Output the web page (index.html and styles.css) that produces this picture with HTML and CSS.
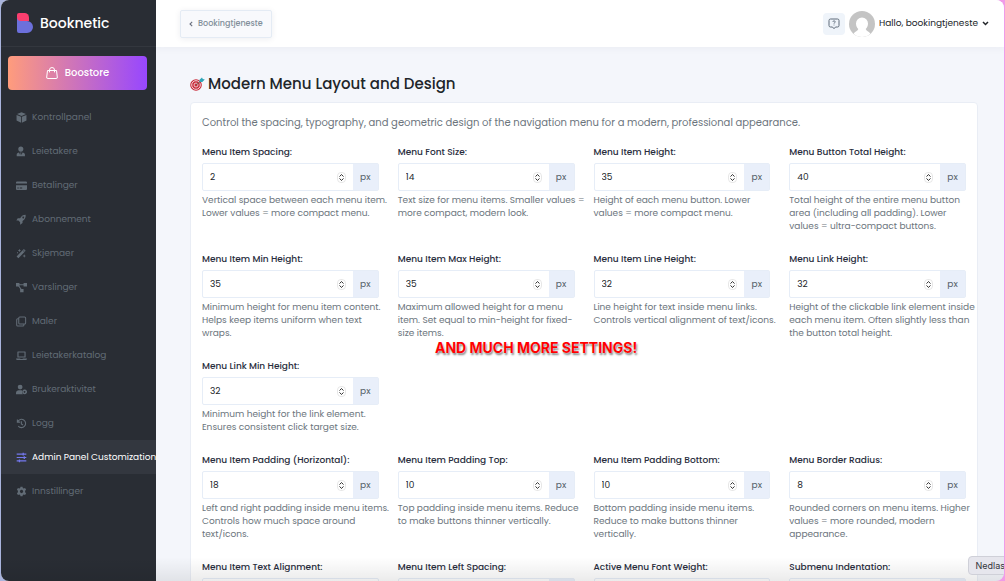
FILE: index.html
```html
<!DOCTYPE html>
<html lang="no">
<head>
  <meta charset="UTF-8" />
  <meta name="viewport" content="width=device-width, initial-scale=1.0" />
  <title>Booknetic</title>
  <link rel="stylesheet" href="styles.css">
</head>
<body>
  <svg class="sprite" aria-hidden="true">
    <symbol id="stepper" viewBox="0 0 9 11">
      <rect x="0.5" y="0.5" width="8" height="10" rx="3.5" fill="#fff" stroke="#dcdcdc" stroke-width="0.7" />
      <path d="M2.8 4.3 4.5 2.5 6.2 4.3M2.8 6.7 4.5 8.5 6.2 6.7" fill="none" stroke="#333" stroke-width="1" stroke-linecap="round" stroke-linejoin="round" />
    </symbol>
  </svg>

  <div class="window">
    <aside class="sidebar">
      <a class="brand" href="#">
        <svg width="16" height="20" viewBox="0 0 16 20">
          <path d="M0 2a2 2 0 0 1 2-2h5.500A4.500 4.500 0 0 1 12 4.500V8H0z" fill="#fb3e6e" />
          <path d="M0 4c0 2.500 1.500 4 4 4h6a6 6 0 0 1 0 12H2a2 2 0 0 1-2-2z" fill="#6c70dc" />
        </svg>
        <span>Booknetic</span>
      </a>
      <a class="boostore" href="#">
        <svg width="12" height="12" viewBox="0 0 12 12" fill="none" stroke="#fff" stroke-width="1">
          <path d="M1.500 3.500h9l.8 6.500a1.200 1.200 0 0 1-1.200 1.500H1.900A1.200 1.200 0 0 1 .7 10z" stroke-linejoin="round" />
          <path d="M3.500 5V3a2.500 2.500 0 0 1 5 0v2" stroke-linecap="round" />
        </svg>
        <span>Boostore</span>
      </a>
      <nav class="menu">
        <a href="#">
          <svg viewBox="0 0 16 16"><path d="M8 .5l6.500 2.500L8 5.800 1.500 3zM.8 4.200L7.400 7v8.500L.8 12.500zM15.200 4.200L8.600 7v8.500l6.600-3z" /></svg>
          <span>Kontrollpanel</span>
        </a>
        <a href="#">
          <svg viewBox="0 0 16 16"><circle cx="7" cy="4.500" r="3.700" /><path d="M1 15v-2.500C1 10.500 2.500 9.500 4.500 9.300L6 13l.6-2L6 9.500h2L7.400 11l.6 2 1.500-3.700c2 .2 3.500 1.200 3.500 3.200V15z" /></svg>
          <span>Leietakere</span>
        </a>
        <a href="#">
          <svg viewBox="0 0 16 16"><path d="M1.500 2h13q1.500 0 1.500 1.500V5H0V3.500Q0 2 1.500 2zM0 7.500h16V13q0 1.500-1.500 1.500h-13Q0 14.500 0 13zM2 11v1.200h2V11zm3.500 0v1.200H9V11z" fill-rule="evenodd" /></svg>
          <span>Betalinger</span>
        </a>
        <a href="#">
          <svg viewBox="0 0 16 16"><path d="M14 1c.4 4-1 7-4.500 9v3L6 15.500V12L3.500 9.500H.5L2.500 6H6C8 2.500 10.500 1 14 1zM10.500 3.700a1.300 1.300 0 1 0 .1 0z" fill-rule="evenodd" /></svg>
          <span>Abonnement</span>
        </a>
        <a href="#">
          <svg viewBox="0 0 16 16"><path d="M11.500 1.500l2.500 2.500L3.500 15 .8 12.300zM10.500 4.500l1 1 1-1.200-1-1z" fill-rule="evenodd" /><path d="M5 1l.7 1.800 1.800.7-1.800.7L5 6l-.7-1.800-1.800-.7 1.800-.7zM12 9l.7 1.800 1.800.7-1.800.7L12 14l-.7-1.800-1.800-.7 1.800-.7zM1.500 6h1.500v1.500H1.500z" /></svg>
          <span>Skjemaer</span>
        </a>
        <a href="#">
          <svg viewBox="0 0 16 16"><path d="M0 1.500h5v5H0zM11 1.500h5v5h-5zM6 10h5v5H6z" /><path d="M4 4h8M3.500 5l4.500 6.500" fill="none" stroke="currentColor" stroke-width="1.500" /></svg>
          <span>Varslinger</span>
        </a>
        <a href="#">
          <svg viewBox="0 0 16 16" fill="none" stroke="currentColor" stroke-width="1.500"><rect x="4" y="1.500" width="10" height="10" rx="1.500" /><path d="M4 4H2.500Q1 4 1 5.500V13q0 1.500 1.500 1.500H10q1.500 0 1.500-1.500v-1.500" /></svg>
          <span>Maler</span>
        </a>
        <a href="#">
          <svg viewBox="0 0 16 16"><path d="M2.800 2h10.400q.8 0 .8.800V11H2V2.800Q2 2 2.800 2zm.9 1.700v5.600h8.600V3.700zM0 12.200h6l.5.800h3l.5-.8h6q0 2.300-2 2.300H2q-2 0-2-2.300z" fill-rule="evenodd" /></svg>
          <span>Leietakerkatalog</span>
        </a>
        <a href="#">
          <svg viewBox="0 0 16 16"><circle cx="6" cy="4.500" r="3.500" /><path d="M0 15v-2c0-2.500 2-4 4-4h3.500q1 0 1.500.5-1 3 1 5.500z" /><path d="M12.500 8a3.500 3.500 0 1 0 .1 0zm0 2.300a1.200 1.200 0 1 1-.1 0z" fill-rule="evenodd" /></svg>
          <span>Brukeraktivitet</span>
        </a>
        <a href="#">
          <svg viewBox="0 0 16 16" fill="none" stroke="currentColor" stroke-width="1.600"><path d="M2 2v4h4M2.500 5.500a6 6 0 1 1 .8 6.200M7.800 4.800V8.500l2.400 1.600" /></svg>
          <span>Logg</span>
        </a>
        <a class="active" href="#">
          <svg viewBox="0 0 16 16" fill="none" stroke="currentColor" stroke-width="1.800"><path d="M1 3h14M1 8h14M1 13h14M10.500 1v4M12 6v4M5 11v4" /></svg>
          <span>Admin Panel Customization</span>
        </a>
        <a href="#">
          <svg viewBox="0 0 16 16"><path d="M6.500 1h3l.4 2 1.300.7 2-.7 1.500 2.600L13.200 7v2l1.500 1.400L13.200 13l-2-.7-1.300.7-.4 2h-3l-.4-2-1.300-.7-2 .7-1.500-2.600L2.800 9V7L1.300 5.600 2.800 3l2 .7L6.100 3zM8 5.600a2.400 2.400 0 1 0 .1 0z" fill-rule="evenodd" /></svg>
          <span>Innstillinger</span>
        </a>
      </nav>
    </aside>

    <div class="main">
      <header class="topbar">
        <button class="tenant" type="button">
          <svg width="4" height="6" viewBox="0 0 4 6"><path d="M3.200.8 1 3l2.200 2.200" fill="none" stroke="#6b7280" stroke-width="1.100" /></svg>
          Bookingtjeneste
        </button>
        <div class="account">
          <button class="help-btn" type="button" aria-label="Help">
            <svg width="12" height="12" viewBox="0 0 12 12" fill="none" stroke="#5f6b7a" stroke-width="1">
              <path d="M2.500 1h7q1.500 0 1.500 1.500v5Q11 9 9.500 9H7.500L6 10.700 4.500 9h-2Q1 9 1 7.500v-5Q1 1 2.500 1z" stroke-linejoin="round" />
              <path d="M4.900 3.900c0-1.500 2.300-1.500 2.300 0 0 .9-1.200.9-1.200 1.800M6 6.600v.8" stroke-width="0.900" />
            </svg>
          </button>
          <button class="user" type="button">
            <svg width="26" height="26" viewBox="0 0 26 26">
              <circle cx="13" cy="13" r="13" fill="#c4c4c4" />
              <path d="M13 6.500a6 6 0 0 1 6 6c0 2.600-1 4.300-2.300 5.500.4 2 3.300 2.500 4.800 4.800A13 13 0 0 1 13 26a13 13 0 0 1-8.500-3.200C6 20.500 8.900 20 9.300 18 8 16.800 7 15.100 7 12.500a6 6 0 0 1 6-6z" fill="#fff" />
            </svg>
            <span>Hallo, bookingtjeneste</span>
            <svg width="7" height="5" viewBox="0 0 7 5"><path d="M1 1l2.500 2.500L6 1" fill="none" stroke="#212529" stroke-width="1.500" /></svg>
          </button>
        </div>
      </header>

      <main class="content">
        <h1>
          <svg width="15" height="14" viewBox="0 0 15 14">
            <circle cx="6" cy="8" r="5.800" fill="#c92a38" />
            <circle cx="6" cy="8" r="4.300" fill="none" stroke="#f1d8dc" stroke-width="1" />
            <circle cx="6" cy="8" r="2" fill="none" stroke="#f1d8dc" stroke-width="0.900" />
            <path d="M6 8l5-4" stroke="#7c5148" stroke-width="1" />
            <path d="M9.500 5V2.700L12 .5l.8 1.500 2 .4-2.500 2.600z" fill="#2fa5b8" />
          </svg>
          Modern Menu Layout and Design
        </h1>
        <section class="card">
          <p class="intro">Control the spacing, typography, and geometric design of the navigation menu for a modern, professional appearance.</p>
          <div class="fields">
            <div class="field">
              <label for="item-spacing">Menu Item Spacing:</label>
              <div class="group"><input id="item-spacing" type="number" value="2"><svg class="stepper"><use href="#stepper" /></svg><span class="unit">px</span></div>
              <p>Vertical space between each menu item. Lower values = more compact menu.</p>
            </div>
            <div class="field">
              <label for="font-size">Menu Font Size:</label>
              <div class="group"><input id="font-size" type="number" value="14"><svg class="stepper"><use href="#stepper" /></svg><span class="unit">px</span></div>
              <p>Text size for menu items. Smaller values = more compact, modern look.</p>
            </div>
            <div class="field">
              <label for="item-height">Menu Item Height:</label>
              <div class="group"><input id="item-height" type="number" value="35"><svg class="stepper"><use href="#stepper" /></svg><span class="unit">px</span></div>
              <p>Height of each menu button. Lower values = more compact menu.</p>
            </div>
            <div class="field">
              <label for="total-height">Menu Button Total Height:</label>
              <div class="group"><input id="total-height" type="number" value="40"><svg class="stepper"><use href="#stepper" /></svg><span class="unit">px</span></div>
              <p>Total height of the entire menu button area (including all padding). Lower values = ultra-compact buttons.</p>
            </div>
            <div class="field">
              <label for="min-height">Menu Item Min Height:</label>
              <div class="group"><input id="min-height" type="number" value="35"><svg class="stepper"><use href="#stepper" /></svg><span class="unit">px</span></div>
              <p>Minimum height for menu item content. Helps keep items uniform when text wraps.</p>
            </div>
            <div class="field">
              <label for="max-height">Menu Item Max Height:</label>
              <div class="group"><input id="max-height" type="number" value="35"><svg class="stepper"><use href="#stepper" /></svg><span class="unit">px</span></div>
              <p>Maximum allowed height for a menu item. Set equal to min-height for fixed-size items.</p>
            </div>
            <div class="field">
              <label for="line-height">Menu Item Line Height:</label>
              <div class="group"><input id="line-height" type="number" value="32"><svg class="stepper"><use href="#stepper" /></svg><span class="unit">px</span></div>
              <p>Line height for text inside menu links. Controls vertical alignment of text/icons.</p>
            </div>
            <div class="field">
              <label for="link-height">Menu Link Height:</label>
              <div class="group"><input id="link-height" type="number" value="32"><svg class="stepper"><use href="#stepper" /></svg><span class="unit">px</span></div>
              <p>Height of the clickable link element inside each menu item. Often slightly less than the button total height.</p>
            </div>
            <div class="field">
              <label for="link-min-height">Menu Link Min Height:</label>
              <div class="group"><input id="link-min-height" type="number" value="32"><svg class="stepper"><use href="#stepper" /></svg><span class="unit">px</span></div>
              <p>Minimum height for the link element. Ensures consistent click target size.</p>
            </div>
          </div>
          <div class="fields">
            <div class="field">
              <label for="padding-x">Menu Item Padding (Horizontal):</label>
              <div class="group"><input id="padding-x" type="number" value="18"><svg class="stepper"><use href="#stepper" /></svg><span class="unit">px</span></div>
              <p>Left and right padding inside menu items. Controls how much space around text/icons.</p>
            </div>
            <div class="field">
              <label for="padding-top">Menu Item Padding Top:</label>
              <div class="group"><input id="padding-top" type="number" value="10"><svg class="stepper"><use href="#stepper" /></svg><span class="unit">px</span></div>
              <p>Top padding inside menu items. Reduce to make buttons thinner vertically.</p>
            </div>
            <div class="field">
              <label for="padding-bottom">Menu Item Padding Bottom:</label>
              <div class="group"><input id="padding-bottom" type="number" value="10"><svg class="stepper"><use href="#stepper" /></svg><span class="unit">px</span></div>
              <p>Bottom padding inside menu items. Reduce to make buttons thinner vertically.</p>
            </div>
            <div class="field">
              <label for="radius">Menu Border Radius:</label>
              <div class="group"><input id="radius" type="number" value="8"><svg class="stepper"><use href="#stepper" /></svg><span class="unit">px</span></div>
              <p>Rounded corners on menu items. Higher values = more rounded, modern appearance.</p>
            </div>
            <div class="field">
              <label for="text-align">Menu Item Text Alignment:</label>
              <div class="group"><select id="text-align"></select></div>
            </div>
            <div class="field">
              <label for="left-spacing">Menu Item Left Spacing:</label>
              <div class="group"><input id="left-spacing" type="number"><span class="unit"></span></div>
            </div>
            <div class="field">
              <label for="font-weight">Active Menu Font Weight:</label>
              <div class="group"><select id="font-weight"></select></div>
            </div>
            <div class="field">
              <label for="indentation">Submenu Indentation:</label>
              <div class="group"><input id="indentation" type="number"><span class="unit"></span></div>
            </div>
          </div>
        </section>
      </main>
    </div>
    <div class="callout">AND MUCH MORE SETTINGS!</div>
    <div class="fade"></div>
    <div class="tooltip">Nedlas</div>
  </div>
</body>
</html>
```

FILE: styles.css
```css
* {
  box-sizing: border-box;
}

body {
  margin: 0;
  font-family: Poppins, Inter, "Noto Sans", sans-serif;
  font-size: 9px;
  color: #212529;
  background: linear-gradient(90deg, #a9b4dc, #f09be8);
}

h1,
p {
  margin: 0;
}

a {
  color: inherit;
  text-decoration: none;
}

button,
input,
select {
  font: inherit;
  color: inherit;
}

.sprite {
  display: none;
}

.window {
  position: relative;
  display: flex;
  height: 100vh;
  margin: 0 1px;
  overflow: hidden;
  border-radius: 8px;
  background: #f4f6fb;
}

.sidebar {
  flex: none;
  width: 155px;
  background: #292d34;
  color: #626c76;
}

.brand {
  display: flex;
  align-items: center;
  gap: 7px;
  height: 47px;
  padding-left: 16px;
  border-bottom: 1px solid #33373e;
  font-size: 14px;
  font-weight: 500;
  color: #fff;
}

.boostore {
  display: flex;
  align-items: center;
  justify-content: center;
  gap: 7px;
  height: 34px;
  margin: 9px 9px 10px 7px;
  border-radius: 4px;
  background: linear-gradient(90deg, #ff9c7c, #9747ff);
  font-size: 10px;
  font-weight: 500;
  color: #fff;
}

.menu a {
  display: flex;
  align-items: center;
  gap: 5px;
  height: 34px;
  padding-left: 15px;
  white-space: nowrap;
}

.menu svg {
  flex: none;
  width: 11px;
  height: 11px;
}

.menu svg:not([fill]) {
  fill: currentColor;
}

.menu .active {
  background: #33373f;
}

.menu .active span {
  color: #fff;
}

.menu .active svg {
  color: #7478ee;
}

.main {
  flex: 1;
  min-width: 0;
}

.topbar {
  display: flex;
  align-items: center;
  justify-content: space-between;
  height: 47px;
  padding: 0 15px 0 24px;
  background: #fff;
  box-shadow: 0 1px 8px rgba(30, 40, 80, 0.05);
}

.tenant {
  display: flex;
  align-items: center;
  gap: 5px;
  height: 28px;
  padding: 0 8px;
  border: 1px solid #e4ebf4;
  border-radius: 2px;
  background: #f8f9fc;
  box-shadow: 0 1px 6px rgba(30, 40, 80, 0.08);
  font-size: 8px;
  font-weight: 500;
  color: #828f9a;
}

.account {
  display: flex;
  align-items: center;
  gap: 4px;
}

.user {
  display: flex;
  align-items: center;
  gap: 4px;
  padding: 0;
  border: 0;
  background: none;
}

.help-btn {
  display: flex;
  align-items: center;
  justify-content: center;
  width: 22px;
  height: 22px;
  padding: 0;
  border: 0;
  border-radius: 4px;
  background: #eff4fa;
}

.content {
  padding: 26px 26px 0 34px;
}

h1 {
  display: flex;
  align-items: center;
  gap: 3px;
  margin-bottom: 7px;
  font-size: 15px;
  font-weight: 500;
  line-height: 22px;
}

.card {
  padding: 11px;
  border: 1px solid #e9edf5;
  border-radius: 4px;
  background: #fff;
}

.intro {
  margin-bottom: 13px;
  font-size: 10px;
  line-height: 18px;
  color: #6c757d;
}

.fields {
  display: grid;
  grid-template-columns: repeat(4, minmax(0, 1fr));
  gap: 19px;
  margin-bottom: 19px;
}

.field label {
  display: block;
  margin-bottom: 3px;
  font-weight: 500;
  line-height: 15px;
  color: #292d3d;
}

.group {
  display: flex;
  align-items: center;
  height: 28px;
  border: 1px solid #e6edf7;
  border-radius: 2px;
}

.group input,
.group select {
  flex: 1;
  min-width: 0;
  padding: 0 7px;
  border: 0;
  background: none;
  appearance: none;
}

.group input::-webkit-inner-spin-button {
  appearance: none;
}

.stepper {
  width: 9px;
  height: 11px;
  margin-right: 7px;
}

.unit {
  display: flex;
  align-items: center;
  justify-content: center;
  align-self: stretch;
  width: 25px;
  background: #e9effa;
  color: #555f69;
}

.field p {
  margin-right: -11px;
  padding-top: 3px;
  line-height: 13px;
  color: #6c757d;
}

.callout {
  position: absolute;
  top: 338px;
  left: 434px;
  font-family: Inter, sans-serif;
  font-size: 14px;
  font-weight: 700;
  line-height: 20px;
  color: #f00;
  text-shadow: 0 0 1px #fff, 1px 2px 2px rgba(0, 0, 0, 0.5);
  white-space: nowrap;
}

.fade {
  position: absolute;
  right: 0;
  bottom: 0;
  left: 0;
  height: 24px;
  background: linear-gradient(rgba(0, 0, 0, 0), rgba(0, 0, 0, 0.08));
  pointer-events: none;
}

.tooltip {
  position: absolute;
  right: -6px;
  bottom: 6px;
  padding: 0 4px 0 6px;
  border: 1px solid #cfd0d8;
  border-radius: 4px;
  background: #e6e6ed;
  font-family: Inter, sans-serif;
  line-height: 17px;
  color: #33343a;
}
```
